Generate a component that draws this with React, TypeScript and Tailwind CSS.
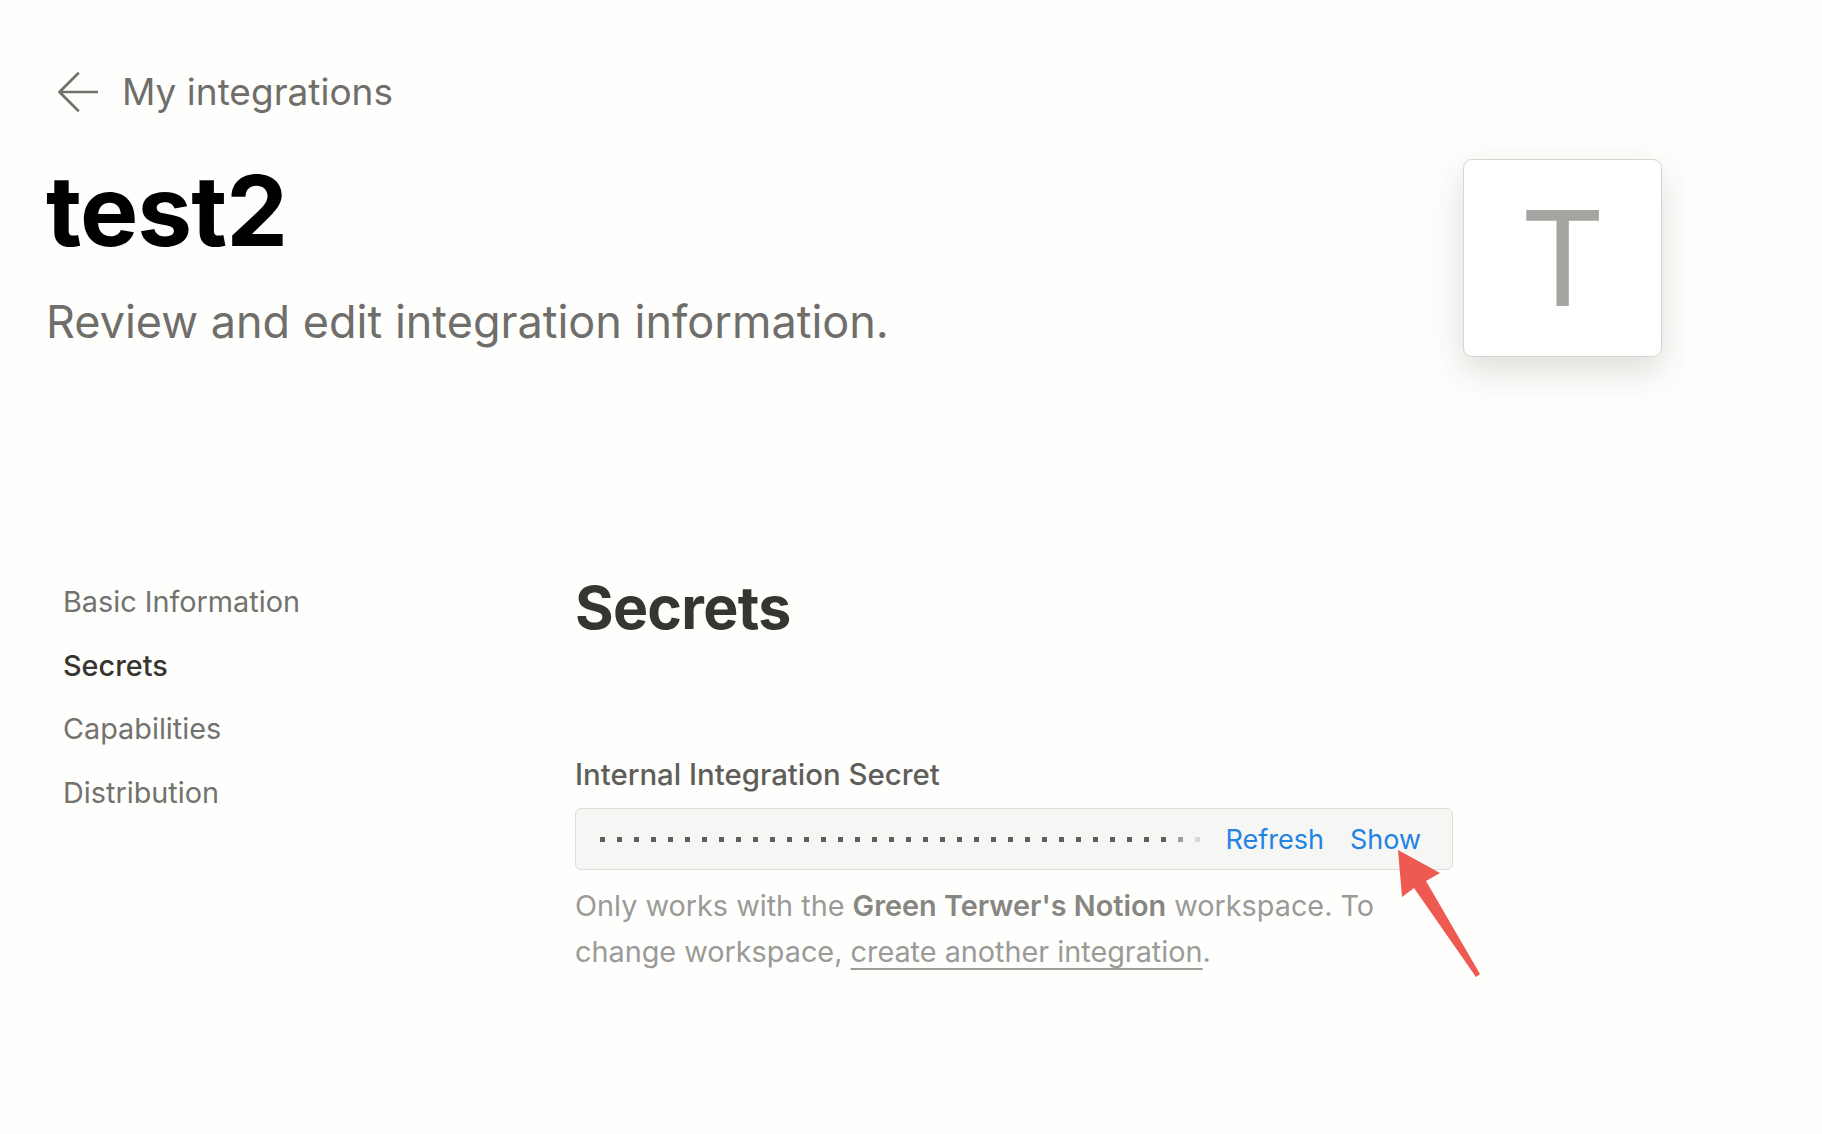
import React from 'react';

const DOTS = 36;

const dotColor = (i: number) => {
  if (i === DOTS - 1) return 'bg-[#d9d8d5]';
  if (i === DOTS - 2) return 'bg-[#9f9e9b]';
  return 'bg-[#5f5e5a]';
};

const navItems = ['Basic Information', 'Secrets', 'Capabilities', 'Distribution'];

export default function App() {
  return (
    <div className="relative min-h-screen w-full bg-[#fefefd] font-['Inter','Noto_Sans',sans-serif] pl-[46px] pr-[160px] pt-[72px]">
      {/* Back link */}
      <div className="flex h-[40px] items-center gap-[24px] pl-[12px]">
        <svg width="40" height="40" viewBox="0 0 40 40" fill="none">
          <path
            d="M20 1.5 L1.5 20 L20 38.5 M1.5 20 H39"
            stroke="#71706c"
            strokeWidth="2.7"
            strokeLinecap="round"
            strokeLinejoin="round"
          />
        </svg>
        <span className="text-[37px] leading-[40px] text-[#6f6e6a]">My integrations</span>
      </div>

      {/* Title row */}
      <div className="mt-[47px] flex items-start justify-between">
        <div>
          <h1 className="mt-[3px] text-[98px] font-bold leading-none tracking-[-0.01em] text-black">test2</h1>
          <p className="mt-[39px] text-[45px] leading-none text-[#6f6e6a]">
            Review and edit integration information.
          </p>
        </div>
        <div className="flex h-[198px] w-[199px] items-center justify-center rounded-[9px] border border-[#d8d6d0] bg-white shadow-[0_14px_34px_rgba(60,50,30,0.16)]">
          <span className="text-[132px] font-normal leading-none text-[#a5a4a0]">T</span>
        </div>
      </div>

      {/* Content */}
      <div className="mt-[221px] flex items-start">
        <nav className="flex w-[529px] flex-col gap-[35.5px] pl-[17px] pt-[10px]">
          {navItems.map((item) => (
            <div
              key={item}
              className={
                item === 'Secrets'
                  ? 'text-[28.8px] font-medium leading-[28px] text-[#37352f]'
                  : 'text-[28.8px] leading-[28px] text-[#73726e]'
              }
            >
              {item}
            </div>
          ))}
        </nav>

        <main className="w-[878px]">
          <h2 className="text-[59px] font-bold leading-none tracking-[-0.012em] text-[#37352f]">Secrets</h2>

          <div className="mt-[124px] text-[29.4px] font-medium leading-[28px] text-[#5f5e5a]">
            Internal Integration Secret
          </div>

          <div className="mt-[19px] flex h-[62px] items-center rounded-[6px] border border-[#dddcd9] bg-[#f6f6f5] pl-[24px] pr-[31px]">
            <div className="flex items-center gap-[12px]">
              {Array.from({ length: DOTS }).map((_, i) => (
                <span key={i} className={`block h-[5px] w-[5px] ${dotColor(i)}`} />
              ))}
            </div>
            <div className="flex-1" />
            <div className="flex items-center gap-[26px] text-[27px] leading-none text-[#2383e2]">
              <span>Refresh</span>
              <span>Show</span>
            </div>
          </div>

          <p className="mt-[13px] text-[28.8px] leading-[46px] text-[#9b9a97]">
            Only works with the <span className="font-semibold text-[#878682]">Green Terwer's Notion</span> workspace. To
            change workspace,{' '}
            <span className="underline decoration-[#9b9a97] decoration-[2px] underline-offset-[6px]">
              create another integration
            </span>
            .
          </p>
        </main>
      </div>

      {/* Red annotation arrow */}
      <svg className="pointer-events-none absolute left-0 top-0" width="1822" height="1134">
        <polygon
          points="1398,850 1440,873 1426,881 1480,974 1476,977 1414,888 1402,897"
          fill="#ee5a52"
          strokeLinejoin="round"
        />
      </svg>
    </div>
  );
}
